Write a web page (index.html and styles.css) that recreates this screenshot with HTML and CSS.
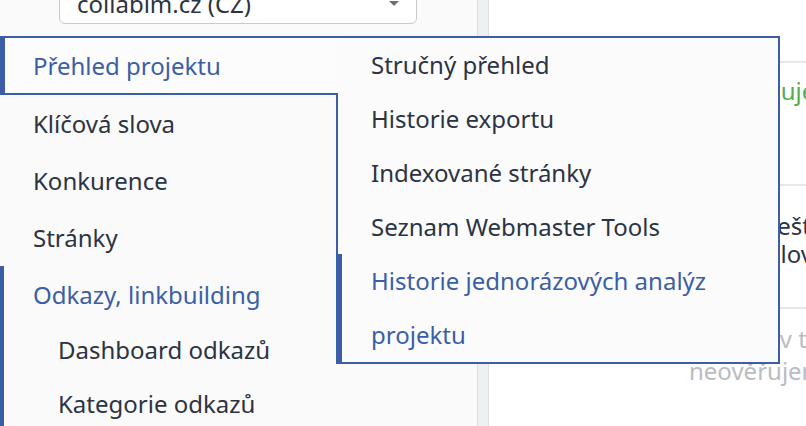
FILE: index.html
```html
<!DOCTYPE html>
<html lang="cs">
<head>
  <meta charset="UTF-8" />
  <meta name="viewport" content="width=device-width, initial-scale=1.0"/>
  <title>Přehled projektu | Collabim</title>
  <link rel="stylesheet" href="styles.css">
</head>
<body>

  <div class="layout">
    <aside class="sidebar">
      <div class="project-select">
        <span>collabim.cz (CZ)</span>
        <span class="caret"></span>
      </div>

      <ul class="menu">
        <li class="menu-item is-open">
          <a href="#" class="menu-link">Přehled projektu</a>
          <ul class="flyout">
            <li><a href="#">Stručný přehled</a></li>
            <li><a href="#">Historie exportu</a></li>
            <li><a href="#">Indexované stránky</a></li>
            <li><a href="#">Seznam Webmaster Tools</a></li>
            <li class="is-active"><a href="#">Historie jednorázových analýz projektu</a></li>
          </ul>
        </li>
        <li class="menu-item"><a href="#" class="menu-link">Klíčová slova</a></li>
        <li class="menu-item"><a href="#" class="menu-link">Konkurence</a></li>
        <li class="menu-item"><a href="#" class="menu-link">Stránky</a></li>
        <li class="menu-item is-active">
          <a href="#" class="menu-link">Odkazy, linkbuilding</a>
          <ul class="submenu">
            <li><a href="#">Dashboard odkazů</a></li>
            <li><a href="#">Kategorie odkazů</a></li>
          </ul>
        </li>
      </ul>
    </aside>

    <div class="scroll-track"></div>

    <main class="content">
      <div class="content-head"></div>
      <div class="row row-status">
        <p class="status-ok">Aktualizuje se</p>
      </div>
      <div class="row row-keywords">
        <p>ještě nemá<br>slova</p>
      </div>
      <div class="row row-note">
        <p class="muted">Stránky v tomto<br>neověřujeme</p>
      </div>
    </main>
  </div>

</body>
</html>
```

FILE: styles.css
```css
body {
  font-family: "Noto Sans", "Open Sans", sans-serif;
  font-size: 24px;
  color: #2c3342;
  margin: 0;
  overflow: hidden;
  height: 426px;
}
a {
  color: inherit;
  text-decoration: none;
}
ul {
  list-style: none;
  margin: 0;
  padding: 0;
}
.layout {
  display: flex;
  height: 426px;
}
.sidebar {
  width: 477px;
  background-color: #fafafa;
  flex-shrink: 0;
}
.project-select {
  height: 40px;
  margin: -18px 60px 12px 59px;
  padding: 0 17px;
  border: 1px solid #c6c9cd;
  border-radius: 6px;
  background: white;
  display: flex;
  align-items: center;
  justify-content: space-between;
}
.caret {
  width: 0;
  height: 0;
  border-left: 5px solid transparent;
  border-right: 5px solid transparent;
  border-top: 5px solid #6b6f76;
}

/* main menu */
.menu-item {
  position: relative;
}
.menu-link {
  display: block;
  line-height: 53px;
  padding-left: 28px;
  border-top: 2px solid transparent;
  border-bottom: 2px solid transparent;
  border-left: 5px solid transparent;
}
.menu-item.is-open > .menu-link {
  position: relative;
  z-index: 2;
  width: 338px;
  box-sizing: border-box;
  line-height: 55px;
  color: #3b5ea6;
  background: #fcfcfc;
  border-color: #3b5ea6;
}
.menu-item.is-active {
  box-shadow: inset 4px 0 0 #3b5ea6;
}
.menu-item.is-active > .menu-link {
  color: #3b5ea6;
}
.submenu li a {
  display: block;
  line-height: 54px;
  padding-left: 58px;
}

/* hover flyout */
.flyout {
  position: absolute;
  z-index: 1;
  top: 0;
  left: 336px;
  width: 444px;
  box-sizing: border-box;
  background: #fbfbfc;
  border: 2px solid #3b5ea6;
}
.flyout li a {
  display: block;
  line-height: 54px;
  padding: 0 30px 0 33px;
}
.flyout li.is-active a {
  margin-left: -2px;
  padding-left: 29px;
  border-left: 6px solid #3b5ea6;
  color: #3b5ea6;
}

.scroll-track {
  width: 10px;
  flex-shrink: 0;
  background: #eef1f4;
  border-left: 1px solid #dcdfe3;
  border-right: 1px solid #dcdfe3;
}

/* right side content */
.content {
  flex: 1;
  background: white;
}
.content-head {
  height: 61px;
}
.row {
  border-top: 2px solid #e5e7ea;
  height: 121px;
}
.row p {
  margin: 0;
  line-height: 28px;
  white-space: nowrap;
}
.row-status p {
  padding: 14px 0 0 203px;
}
.status-ok {
  color: #55ad4a;
}
.row-keywords p {
  padding: 26px 0 0 280px;
  text-indent: 2px;
}
.row-note p {
  padding: 14px 0 0 200px;
  line-height: 32px;
}
.muted {
  color: #b9bcc0;
}
```
